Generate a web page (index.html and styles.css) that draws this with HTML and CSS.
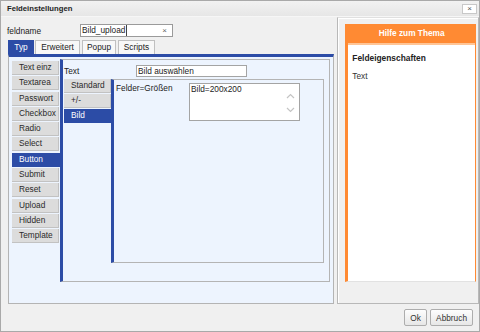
FILE: index.html
```html
<!DOCTYPE html>
<html lang="de">
<head>
<meta charset="UTF-8">
<title>Feldeinstellungen</title>
<link rel="stylesheet" href="styles.css">
</head>
<body>
  <div class="window">
    <div class="titlebar">
      <span class="title">Feldeinstellungen</span>
      <span class="close">×</span>
    </div>

    <div class="body">
      <div class="left">
        <div class="namerow">
          <label class="namelabel">feldname</label>
          <div class="nameinput"><span class="namevalue">Bild_upload</span><span class="clear">×</span></div>
        </div>

        <!-- tabs -->
        <ul class="tabs">
          <li class="tab active">Typ</li>
          <li class="tab w-erw">Erweitert</li>
          <li class="tab w-pop">Popup</li>
          <li class="tab w-scr">Scripts</li>
        </ul>

        <div class="panel">
          <div class="typelist">
            <div class="tbtn">Text einz</div>
            <div class="tbtn">Textarea</div>
            <div class="tbtn">Passwort</div>
            <div class="tbtn">Checkbox</div>
            <div class="tbtn">Radio</div>
            <div class="tbtn">Select</div>
            <div class="tbtn selected">Button</div>
            <div class="tbtn">Submit</div>
            <div class="tbtn">Reset</div>
            <div class="tbtn">Upload</div>
            <div class="tbtn">Hidden</div>
            <div class="tbtn">Template</div>
          </div>

          <div class="inner">
            <div class="textrow">
              <span class="lbl">Text</span>
              <div class="field">Bild auswählen</div>
            </div>
            <div class="sub">
              <div class="sublist">
                <div class="tbtn">Standard</div>
                <div class="tbtn">+/-</div>
                <div class="tbtn selected">Bild</div>
              </div>
              <div class="subpanel">
                <span class="lbl2">Felder=Größen</span>
                <div class="area">
                  <span>Bild=200x200</span>
                  <svg class="scroll" width="9" height="22" viewBox="0 0 9 22">
                    <path d="M1 6 L4.5 2.5 L8 6" fill="none" stroke="#c4c4c4" stroke-width="1.2"/>
                    <path d="M1 16 L4.5 19.5 L8 16" fill="none" stroke="#c4c4c4" stroke-width="1.2"/>
                  </svg>
                </div>
              </div>
            </div>
          </div>
        </div>
      </div>

      <div class="right">
        <div class="help">
          <div class="helphead">Hilfe zum Thema</div>
          <div class="helpbody">
            <h3>Feldeigenschaften</h3>
            <p>Text</p>
          </div>
        </div>
      </div>
    </div>

    <div class="footer">
      <button class="btn ok">Ok</button>
      <button class="btn">Abbruch</button>
    </div>
  </div>
</body>
</html>
```

FILE: styles.css
```css
body { margin: 0; padding: 0; font-family: "Liberation Sans", Arial, sans-serif; font-size: 8.3px; color: #222; background: #f0f0f0; }
.window { width: 480px; height: 332px; box-sizing: border-box; border: 1px solid #a9a9a9; background: #f0f0f0; display: flex; flex-direction: column; }

.titlebar { height: 15px; display: flex; align-items: center; justify-content: space-between; padding: 0 2px 0 6px; background: linear-gradient(#f2f2f2, #e6e6e6); border-bottom: 1px solid #f6f6f6; }
.title { font-weight: bold; font-size: 7.7px; color: #1e1e1e; }
.close { width: 13px; height: 8px; line-height: 8px; margin-top: 1px; border: 1px solid #c8c8c8; background: #fff; color: #555; font-size: 8px; text-align: center; }

.body { display: flex; height: 287px; }
.left { width: 329px; padding-left: 6px; display: flex; flex-direction: column; }
.right { width: 131px; margin-left: 2px; border: 1px solid #b8b8b8; border-top-color: #e0e0e0; box-shadow: inset 1px 1px 0 #fff; padding: 6px 2px 21px 7px; }

.namerow { display: flex; align-items: center; height: 13px; margin-top: 7px; }
.namelabel { width: 73px; color: #222; }
.nameinput { width: 91px; height: 11px; border: 1px solid #9a9a9a; background: #fff; display: flex; align-items: center; justify-content: space-between; }
.namevalue { height: 11px; line-height: 11px; padding: 0 1px; border-right: 1px solid #444; }
.clear { color: #666; font-size: 8px; padding-right: 5px; }

.tabs { list-style: none; margin: 3px 0 0 1px; padding: 0; display: flex; height: 14px; }
.tab { box-sizing: border-box; height: 14px; line-height: 13px; margin-right: 2px; border: 1px solid #c0c0c0; border-bottom: none; background: #f8f8f8; text-align: center; color: #222; }
.tab.active { width: 26px; margin-right: 1px; background: #2c4ca6; border-color: #2c4ca6; color: #fff; }
.w-erw { width: 45px; }
.w-pop { width: 34px; }
.w-scr { width: 37px; }

.panel { flex: 1; margin-left: 1px; margin-right: 1px; border: 1px solid #b4b4b4; border-top: 3px solid #2c4ca6; background: #edf4fe; display: flex; padding: 2px 3px 21px 3px; }

.typelist { width: 48px; margin-top: 2px; display: flex; flex-direction: column; gap: 1.3px; }
.tbtn { box-sizing: border-box; width: 47px; height: 14px; line-height: 13px; padding-left: 7px; background: #dcdcdc; border-right: 1px solid #c2c2c2; border-bottom: 1px solid #c2c2c2; color: #2a2a2a; white-space: nowrap; }
.tbtn.selected { width: 48px; background: #2c4ca6; border-color: #2c4ca6; color: #fff; }

.inner { flex: 1; border: 1px solid #b4b4b4; border-left: 3px solid #2c4ca6; padding: 5px 5px 18px 1px; display: flex; flex-direction: column; }
.textrow { display: flex; align-items: center; height: 11px; }
.lbl { width: 72px; }
.field { width: 108px; height: 10px; line-height: 10px; border: 1px solid #a4a4a4; background: #fff; padding-left: 1px; }

.sub { flex: 1; display: flex; margin-top: 3px; }
.sublist { width: 47px; display: flex; flex-direction: column; gap: 1px; }
.subpanel { flex: 1; border: 1px solid #b4b4b4; border-left: 3px solid #2c4ca6; display: flex; align-items: flex-start; padding: 3px 0 0 2px; }
.lbl2 { width: 73px; line-height: 11px; }
.area { position: relative; box-sizing: border-box; width: 111px; height: 38px; border: 1px solid #a4a4a4; background: #fff; padding-left: 1px; line-height: 11px; }
.scroll { position: absolute; right: 4px; top: 8px; }

.help { height: 100%; box-sizing: border-box; border-left: 3px solid #ff8a33; border-right: 1px solid #ff8a33; border-bottom: 1px solid #e2e2e2; background: #fff; }
.helphead { height: 19px; line-height: 19px; background: #ff8a33; color: #fff; font-weight: bold; text-align: center; border-bottom: 2px solid #ffc596; }
.helpbody { padding: 0 0 0 4px; }
.helpbody h3 { margin: 8px 0 0; font-size: 8.4px; color: #222; }
.helpbody p { margin: 8px 0 0; color: #333; }

.footer { flex: 1; display: flex; justify-content: flex-end; align-items: flex-start; padding: 5px 6px 0 0; gap: 3px; }
.btn { height: 17px; padding: 0 5px; font-family: "Liberation Sans", Arial, sans-serif; font-size: 8.3px; color: #333; border: 1px solid #adadad; border-radius: 2px; background: linear-gradient(#fdfdfd, #e7e7e7); }
.btn.ok { width: 23px; padding: 0; }
```
